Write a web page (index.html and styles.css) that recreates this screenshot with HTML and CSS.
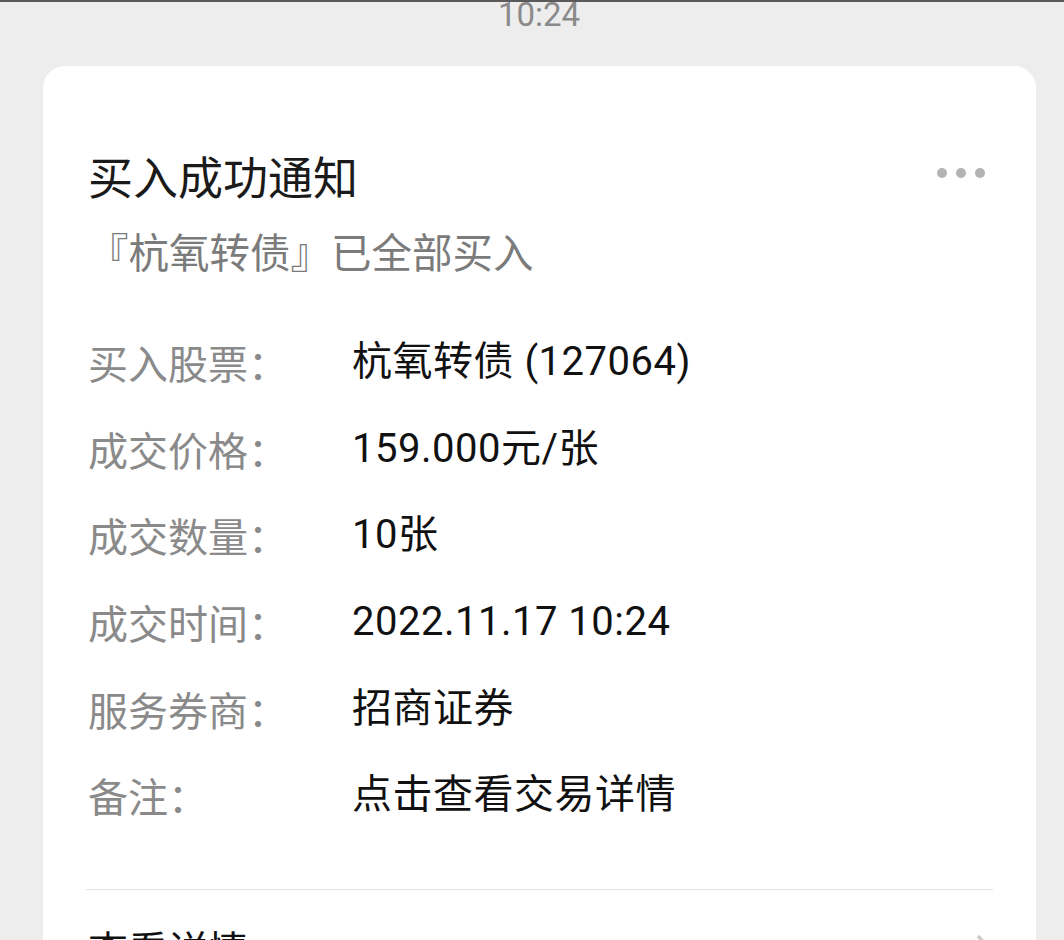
FILE: index.html
```html
<html lang="zh-CN">
  <head>
    <meta charset="utf-8">
    <title>买入成功通知</title>
    <link rel="stylesheet" href="styles.css">
  </head>
  <body>
    <div class="status-time">10:24</div>
    <div class="card">
      <div class="card-head">
        <h1 class="card-title">买入成功通知</h1>
        <svg class="more" width="50" height="12" viewBox="0 0 50 12">
          <circle cx="6" cy="6" r="5"></circle>
          <circle cx="25" cy="6" r="5"></circle>
          <circle cx="44" cy="6" r="5"></circle>
        </svg>
      </div>
      <p class="card-sub">『杭氧转债』已全部买入</p>
      <dl class="fields">
        <dt>买入股票：</dt>
        <dd>杭氧转债 (127064)</dd>
        <dt>成交价格：</dt>
        <dd>159.000元/张</dd>
        <dt>成交数量：</dt>
        <dd>10张</dd>
        <dt>成交时间：</dt>
        <dd>2022.11.17 10:24</dd>
        <dt>服务券商：</dt>
        <dd>招商证券</dd>
        <dt>备注：</dt>
        <dd>点击查看交易详情</dd>
      </dl>
      <a class="card-foot" href="#">
        <span>查看详情</span>
        <svg class="chevron" width="16" height="28" viewBox="0 0 16 28">
          <path d="M2 2 L13 14 L2 26"></path>
        </svg>
      </a>
    </div>
  </body>
</html>
```

FILE: styles.css
```css
body {
  margin: 0;
  background-color: #ededed;
  border-top: 2px solid #5a5a5a;
  font-family: Roboto, "Noto Sans CJK SC", sans-serif;
  overflow: hidden;
  height: 938px;
}

.status-time {
  height: 64px;
  padding-left: 14px;
  text-align: center;
  font-size: 33px;
  line-height: 26px;
  color: #8a8a8a;
}

.card {
  margin: 0 28px 0 43px;
  padding: 80px 43px 0 45px;
  background-color: #fff;
  border-radius: 22px 22px 0 0;
  height: 900px;
}

.card-head {
  display: flex;
  justify-content: space-between;
  align-items: flex-start;
}
.card-title {
  margin: 0;
  font-family: "Noto Sans CJK SC", sans-serif;
  font-size: 45px;
  font-weight: normal;
  line-height: 60px;
  color: #1a1a1a;
}
.more { margin: 21px 7px 0 0; }
.more circle { fill: #b3b3b3; }

.card-sub {
  margin: 15px 0 0 0;
  font-family: "Noto Sans CJK SC", sans-serif;
  font-size: 40.5px;
  line-height: 60px;
  color: #7b7b7b;
}

.fields {
  margin: 38px 0 0 0;
  display: grid;
  grid-template-columns: 264px 1fr;
  grid-auto-rows: 86.6px;
  align-items: center;
  font-size: 40px;
  line-height: 1;
}
.fields dt {
  font-family: "Noto Sans CJK SC", sans-serif;
  color: #8a8a8a;
}
.fields dd {
  margin: 0;
  color: #111;
  letter-spacing: 0.5px;
}

.card-foot {
  display: flex;
  justify-content: space-between;
  align-items: center;
  margin: 50px 0 0 -2px;
  padding: 28px 0 0 2px;
  border-top: 1px solid #e3e3e3;
  font-family: "Noto Sans CJK SC", sans-serif;
  font-size: 40px;
  line-height: 60px;
  color: #111;
  text-decoration: none;
}
.chevron { margin-right: 1px; }
.chevron path { fill: none; stroke: #cccccc; stroke-width: 3.5; }
```
